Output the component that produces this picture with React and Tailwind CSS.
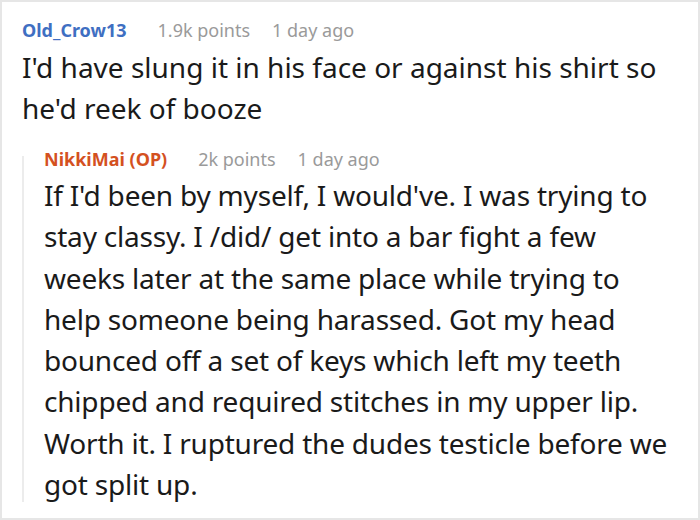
import React from "react";

const Meta = ({ name, nameClass, points, time }) => (
  <div className="flex items-baseline text-[18px] leading-[24px]">
    <span className={`font-bold mr-[31px] ${nameClass}`}>{name}</span>
    <span className="text-[#9a9a9a] mr-[22px]">{points}</span>
    <span className="text-[#9a9a9a]">{time}</span>
  </div>
);

export default function App() {
  return (
    <div
      className="w-[700px] h-[520px] bg-white border-2 border-[#e6e6e6] overflow-hidden"
      style={{ fontFamily: "'Noto Sans', sans-serif" }}
    >
      <div className="pl-[20px] pt-[16px]">
        <Meta
          name="Old_Crow13"
          nameClass="text-[#3f6fc2]"
          points="1.9k points"
          time="1 day ago"
        />
        <p className="text-[28px] leading-[41px] text-[#1a1a1a] pr-4 mt-[5px]">
          I'd have slung it in his face or against his shirt so he'd reek of booze
        </p>
        <div className="flex mt-[18px]">
          <div className="w-[2px] bg-[#ececec] mt-[9px] mb-[3px] shrink-0" />
          <div className="pl-[20px] pr-4">
            <Meta
              name="NikkiMai (OP)"
              nameClass="text-[#d4511f]"
              points="2k points"
              time="1 day ago"
            />
            <p className="text-[28px] leading-[41.3px] text-[#1a1a1a] mt-[4px] tracking-[-0.2px]">
              If I'd been by myself, I would've. I was trying to stay classy. I /did/ get into a bar fight a few weeks later at the same place while trying to help someone being harassed. Got my head bounced off a set of keys which left my teeth chipped and required stitches in my upper lip. Worth it. I ruptured the dudes testicle before we got split up.
            </p>
          </div>
        </div>
      </div>
    </div>
  );
}
